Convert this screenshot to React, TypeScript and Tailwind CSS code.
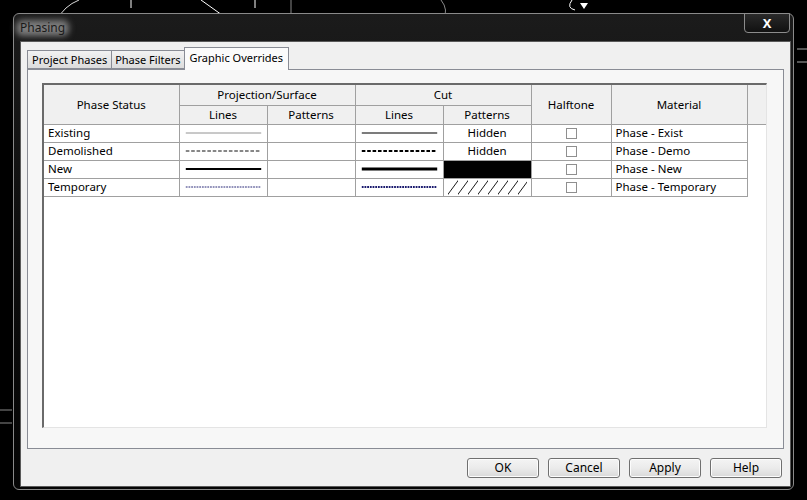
import React from 'react';

const rows = [
  { status: 'Existing', proj: 'existing', cut: 'existing', pattern: 'Hidden', material: 'Phase - Exist' },
  { status: 'Demolished', proj: 'demolished', cut: 'demolished', pattern: 'Hidden', material: 'Phase - Demo' },
  { status: 'New', proj: 'new', cut: 'new', pattern: 'solid', material: 'Phase - New' },
  { status: 'Temporary', proj: 'temporary', cut: 'temporary', pattern: 'hatch', material: 'Phase - Temporary' },
];

// line samples, thin for projection and heavier for cut
const lineStyles: Record<string, { proj: [string, number, string]; cut: [string, number, string] }> = {
  existing: { proj: ['#8c8c8c', 1, ''], cut: ['#7c7c7c', 2, ''] },
  demolished: { proj: ['#000', 1, '4 2'], cut: ['#000', 2, '4 2'] },
  new: { proj: ['#000', 2, ''], cut: ['#000', 3, ''] },
  temporary: { proj: ['#1a1a6e', 1, '2 1'], cut: ['#1a1a6e', 2, '2 1'] },
};

function LineSample({ kind, cut }: { kind: string; cut?: boolean }) {
  const [color, width, dash] = cut ? lineStyles[kind].cut : lineStyles[kind].proj;
  return (
    <svg className="block w-full h-[6px]" viewBox="0 0 88 6" preserveAspectRatio="none">
      <line x1="2" y1="3" x2="86" y2="3" stroke={color} strokeWidth={width} strokeDasharray={dash || undefined} />
    </svg>
  );
}

function Hatch() {
  return (
    <svg className="block w-full h-[17px]" height="17">
      <defs>
        <pattern id="hatch" width="10" height="17" patternUnits="userSpaceOnUse">
          <line x1="-2" y1="18" x2="12" y2="-1" stroke="#000" strokeWidth="0.9" />
        </pattern>
      </defs>
      <rect width="100%" height="17" fill="url(#hatch)" />
    </svg>
  );
}

function DialogButton({ label }: { label: string }) {
  return (
    <button className="w-[72px] h-[20px] rounded-[3px] border border-[#707070] bg-gradient-to-b from-[#f4f4f4] via-[#ebebeb] to-[#d9d9d9] text-[12px] leading-none text-black shadow-[inset_0_0_0_1px_#fcfcfc]">
      {label}
    </button>
  );
}

export default function App() {
  const cell = 'border border-[#a0a0a0] px-[4px] py-0';
  return (
    <div className="relative w-[807px] h-[500px] bg-black overflow-hidden font-['Noto_Sans',sans-serif]">
      {/* CAD drawing behind the dialog */}
      <svg className="absolute inset-0" width="807" height="500">
        <path d="M57 20 Q64 6 79 0" stroke="#d8d8d8" strokeWidth="1" fill="none" />
        <line x1="131" y1="0" x2="131" y2="8" stroke="#fff" />
        <line x1="201" y1="0" x2="222" y2="15" stroke="#fff" />
        <line x1="255" y1="0" x2="255" y2="8" stroke="#fff" />
        <line x1="291" y1="0" x2="291" y2="13" stroke="#888" />
        <line x1="301" y1="18" x2="335" y2="18" stroke="#fff" strokeDasharray="5 6" />
        <path d="M441 0 Q449 10 443 20" stroke="#888" fill="none" />
        <path d="M572 0 Q566 8 575 10" stroke="#fff" fill="none" />
        <path d="M580 3 L588 3 L584 9 Z" fill="#fff" />
        <line x1="797" y1="49" x2="807" y2="49" stroke="#aaa" />
        <line x1="797" y1="62" x2="807" y2="62" stroke="#aaa" />
        <line x1="0" y1="410" x2="12" y2="410" stroke="#888" />
        <line x1="0" y1="423" x2="12" y2="423" stroke="#888" />
      </svg>

      {/* window */}
      <div className="absolute left-[13px] top-[13px] w-[781px] h-[477px] rounded-[6px] border border-[#8a8a8a] bg-gradient-to-b from-[#1b1b1b] via-[#0d0d0d] to-[#050505] flex flex-col">
        <div className="h-[27px] flex items-start justify-between">
          <div className="relative ml-[6px] mt-[8px] text-[12px] leading-none">
            <div className="absolute -inset-x-[4px] -inset-y-[2px] rounded-[6px] bg-[#7c7c7c] blur-[3px]" />
            <span className="relative text-[#1a1a1a]">Phasing</span>
          </div>
          <div className="mr-[3px] -mt-px w-[46px] h-[20px] rounded-b-[4px] border border-[#8c8c8c] bg-gradient-to-b from-[#2a2a2a] to-[#111] flex items-center justify-center text-white text-[13px] font-bold leading-none">
            X
          </div>
        </div>

        <div className="ml-[6px] mr-[2px] h-[446px] border border-[#5a5a5a] bg-[#f0f0f0] flex flex-col">
          {/* tabs */}
          <div className="flex items-end pl-[6px] pt-[4px] h-[27px]">
            <div className="h-[19px] px-[4px] border border-[#898c95] border-r-0 bg-gradient-to-b from-[#f2f2f2] to-[#dcdcdc] text-[11px] leading-[17px] text-black">
              Project Phases
            </div>
            <div className="h-[19px] px-[3px] border border-[#898c95] bg-gradient-to-b from-[#f2f2f2] to-[#dcdcdc] text-[11px] leading-[17px] text-black">
              Phase Filters
            </div>
            <div className="relative z-10 -mb-px -ml-px h-[23px] px-[5px] border border-[#898c95] border-b-0 bg-[#fbfbfb] text-[11px] leading-[19px] text-black">
              Graphic Overrides
            </div>
          </div>

          {/* tab panel */}
          <div className="mx-[6px] h-[380px] border border-[#898c95] bg-[#f7f7f7] pl-[14px] pt-[13px]">
            <div className="w-[725px] h-[345px] border-t-2 border-l-2 border-[#6a6a6a] border-r border-b border-r-[#e4e4e4] border-b-[#e4e4e4] bg-white overflow-hidden">
              <table className="w-[723px] table-fixed border-collapse text-[11.5px] text-black leading-none">
                <colgroup>
                  <col className="w-[135px]" />
                  <col className="w-[88px]" />
                  <col className="w-[88px]" />
                  <col className="w-[88px]" />
                  <col className="w-[88px]" />
                  <col className="w-[80px]" />
                  <col className="w-[136px]" />
                  <col className="w-[20px]" />
                </colgroup>
                <thead className="bg-[#f0f0f0]">
                  <tr className="h-[20px]">
                    <th rowSpan={2} className={`${cell} border-l-0 border-t-0 font-normal`}>Phase Status</th>
                    <th colSpan={2} className={`${cell} border-t-0 font-normal`}>Projection/Surface</th>
                    <th colSpan={2} className={`${cell} border-t-0 font-normal`}>Cut</th>
                    <th rowSpan={2} className={`${cell} border-t-0 font-normal`}>Halftone</th>
                    <th rowSpan={2} className={`${cell} border-t-0 font-normal`}>Material</th>
                    <th rowSpan={2} className="border-b border-[#a0a0a0] border-r-0"></th>
                  </tr>
                  <tr className="h-[19px]">
                    <th className={`${cell} font-normal`}>Lines</th>
                    <th className={`${cell} font-normal`}>Patterns</th>
                    <th className={`${cell} font-normal`}>Lines</th>
                    <th className={`${cell} font-normal`}>Patterns</th>
                  </tr>
                </thead>
                <tbody>
                  {rows.map((r) => (
                    <tr key={r.status} className="h-[18px]">
                      <td className={`${cell} border-l-0 text-left`}>{r.status}</td>
                      <td className={`${cell} px-[1px]`}>
                        <LineSample kind={r.proj} />
                      </td>
                      <td className={cell}></td>
                      <td className={`${cell} px-[1px]`}>
                        <LineSample kind={r.cut} cut />
                      </td>
                      <td
                        className={`${cell} text-center ${r.pattern === 'solid' ? 'bg-black' : ''} ${
                          r.pattern === 'hatch' ? 'p-0' : ''
                        }`}
                      >
                        {r.pattern === 'Hidden' && 'Hidden'}
                        {r.pattern === 'hatch' && <Hatch />}
                      </td>
                      <td className={`${cell} text-center`}>
                        <span className="inline-block align-middle w-[11px] h-[11px] border border-[#8f8f8f] bg-white" />
                      </td>
                      <td className={`${cell} text-left`}>{r.material}</td>
                      <td></td>
                    </tr>
                  ))}
                </tbody>
              </table>
            </div>
          </div>

          {/* dialog buttons */}
          <div className="flex justify-end gap-[9px] pr-[8px] pt-[9px]">
            <DialogButton label="OK" />
            <DialogButton label="Cancel" />
            <DialogButton label="Apply" />
            <DialogButton label="Help" />
          </div>
        </div>
      </div>
    </div>
  );
}
